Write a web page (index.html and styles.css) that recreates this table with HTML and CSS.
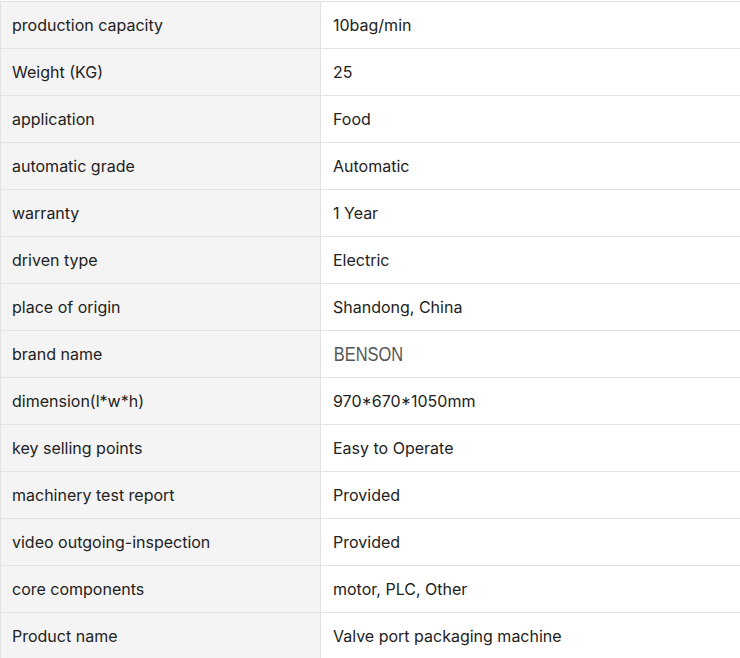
FILE: index.html
```html
<!DOCTYPE html>
<html>
<head>
<meta charset="utf-8">
<link rel="stylesheet" href="styles.css">
</head>
<body>
<div class="wrap">
<table class="spec">
<tbody>
<tr><td class="k">production capacity</td><td class="v">10bag/min</td></tr>
<tr><td class="k">Weight (KG)</td><td class="v">25</td></tr>
<tr><td class="k">application</td><td class="v">Food</td></tr>
<tr><td class="k">automatic grade</td><td class="v">Automatic</td></tr>
<tr><td class="k">warranty</td><td class="v">1 Year</td></tr>
<tr><td class="k">driven type</td><td class="v">Electric</td></tr>
<tr><td class="k">place of origin</td><td class="v">Shandong, China</td></tr>
<tr><td class="k">brand name</td><td class="v"><span class="brand">BENSON</span></td></tr>
<tr><td class="k">dimension(l*w*h)</td><td class="v">970*670*1050mm</td></tr>
<tr><td class="k">key selling points</td><td class="v">Easy to Operate</td></tr>
<tr><td class="k">machinery test report</td><td class="v">Provided</td></tr>
<tr><td class="k">video outgoing-inspection</td><td class="v">Provided</td></tr>
<tr><td class="k">core components</td><td class="v">motor, PLC, Other</td></tr>
<tr><td class="k">Product name</td><td class="v">Valve port packaging machine</td></tr>
</tbody>
</table>
</div>
</body>
</html>
```
FILE: styles.css
```css
html, body {
  margin: 0;
  padding: 0;
  background: #fff;
}
.wrap {
  padding-top: 1px;
  width: 760px;
  overflow: hidden;
}
.spec {
  border-collapse: collapse;
  width: 760px;
  table-layout: fixed;
  font-family: Inter, "Noto Sans", sans-serif;
  font-size: 16px;
  color: #222;
}
.spec td {
  border: 1px solid #e2e2e2;
  height: 47px;
  padding: 0 11px;
  box-sizing: border-box;
  vertical-align: middle;
  line-height: 20px;
}
.spec .k {
  width: 320px;
  background: #f4f4f4;
}
.spec .v {
  background: #fff;
  padding-left: 12px;
}
.brand {
  font-family: "Liberation Sans", sans-serif;
  font-size: 20px;
  color: #555;
  display: inline-block;
  padding-left: 1px;
  transform: scaleX(0.82);
  transform-origin: left center;
}
```
